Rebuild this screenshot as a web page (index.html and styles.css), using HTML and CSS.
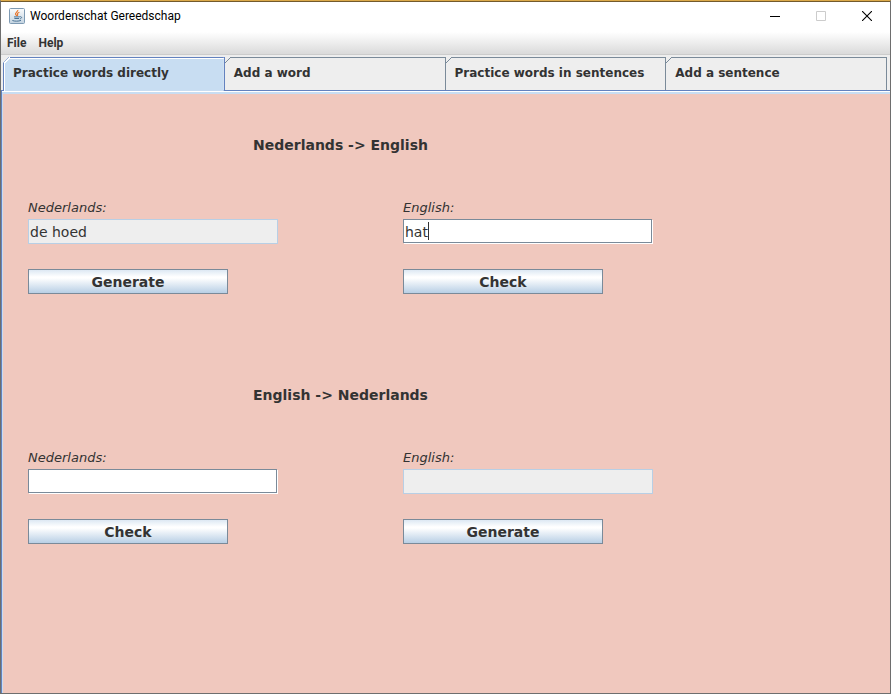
FILE: index.html
```html
<!DOCTYPE html>
<html lang="nl">
<head>
    <meta charset="UTF-8">
    <meta name="viewport" content="width=device-width, initial-scale=1.0">
    <title>Woordenschat Gereedschap</title>
    <link rel="stylesheet" href="styles.css">
</head>
<body>

    <header class="titlebar">
        <svg class="app-icon" width="16" height="16" viewBox="0 0 16 16">
            <defs>
                <linearGradient id="iconBg" x1="0" y1="0" x2="0" y2="1">
                    <stop offset="0" stop-color="#fbfcfd"/>
                    <stop offset="1" stop-color="#c3d3e0"/>
                </linearGradient>
            </defs>
            <rect x="0.5" y="0.5" width="15" height="15" rx="1" fill="url(#iconBg)" stroke="#7e9ab3"/>
            <path d="M8.8 2C9.2 3.6 5.6 4.8 6.6 6.4L7.8 8M10.4 4.2C8.2 5 8 5.9 8.7 6.8L8.2 8" fill="none" stroke="#e8762c" stroke-width="1.2"/>
            <path d="M5 8.9H10.6M5.4 10.5H10M3.4 12.5C5.5 13.4 9.6 13.4 12 12.4M10.6 8.7C13.4 8.3 13 10.5 10.8 10.9" fill="none" stroke="#4a7396"/>
        </svg>
        <h1>Woordenschat Gereedschap</h1>
        <div class="window-buttons">
            <button type="button" aria-label="Minimize">
                <svg width="10" height="10" viewBox="0 0 10 10"><path d="M0 5.5H10" stroke="#000"/></svg>
            </button>
            <button type="button" aria-label="Maximize" disabled>
                <svg width="10" height="10" viewBox="0 0 10 10"><path d="M0.5 0.5H9.5V9.5H0.5Z" fill="none" stroke="#ccc"/></svg>
            </button>
            <button type="button" aria-label="Close">
                <svg width="10" height="10" viewBox="0 0 10 10"><path d="M0 0L10 10M10 0L0 10" stroke="#000" stroke-width="1.1"/></svg>
            </button>
        </div>
    </header>

    <nav class="menubar">
        <a href="#file">File</a>
        <a href="#help">Help</a>
    </nav>

    <div class="tabs" role="tablist">
        <button type="button" class="tab active" role="tab" aria-selected="true">Practice words directly</button>
        <button type="button" class="tab" role="tab">Add a word</button>
        <button type="button" class="tab" role="tab">Practice words in sentences</button>
        <button type="button" class="tab" role="tab">Add a sentence</button>
    </div>

    <main>
        <form class="practice">
            <h2>Nederlands -&gt; English</h2>
            <div class="column">
                <label for="nlWord">Nederlands:</label>
                <input type="text" id="nlWord" value="de hoed" readonly>
                <button type="button">Generate</button>
            </div>
            <div class="column">
                <label for="enAnswer">English:</label>
                <div class="field">
                    <input type="text" id="enAnswer" value="hat">
                    <span class="caret"></span>
                </div>
                <button type="button">Check</button>
            </div>
        </form>

        <form class="practice">
            <h2>English -&gt; Nederlands</h2>
            <div class="column">
                <label for="nlAnswer">Nederlands:</label>
                <input type="text" id="nlAnswer">
                <button type="button">Check</button>
            </div>
            <div class="column">
                <label for="enWord">English:</label>
                <input type="text" id="enWord" readonly>
                <button type="button">Generate</button>
            </div>
        </form>
    </main>

</body>
</html>
```
FILE: styles.css
```css
* {
    margin: 0;
    padding: 0;
    box-sizing: border-box;
}

body {
    font-family: Verdana, 'DejaVu Sans', sans-serif;
    color: #333;
    background-color: #eee;
    display: flex;
    flex-direction: column;
    min-height: 100vh;
    border: 1px solid #6e6e6e;
    border-top-color: #dcaa4a;
}

button {
    font-family: inherit;
    color: inherit;
}

.titlebar {
    display: flex;
    align-items: center;
    height: 31px;
    padding: 0 0 2px 8px;
    background-color: #fff;
    border-top: 1px solid #735a2c;
}

.titlebar h1 {
    flex: 1;
    margin-left: 5px;
    font: 12px 'Segoe UI', Roboto, sans-serif;
    color: #000;
}

.window-buttons {
    display: flex;
}

.window-buttons button {
    display: flex;
    align-items: center;
    justify-content: center;
    width: 46px;
    height: 28px;
    border: none;
    background: none;
}

.menubar {
    display: flex;
    gap: 12px;
    height: 23px;
    padding-left: 6px;
    line-height: 22px;
    background: linear-gradient(#fff, #dadada);
    border-bottom: 1px solid #ccc;
}

.menubar a {
    font-family: Tahoma, Roboto, sans-serif;
    font-size: 12px;
    font-weight: bold;
    color: #333;
    text-decoration: none;
}

.tabs {
    display: flex;
    padding: 2px 3px 0 2px;
    border-bottom: 1px solid #6382bf;
}

/* the corner line and the top edge are background layers */
.tab {
    flex: 1;
    height: 33px;
    padding: 0 0 1px 9px;
    text-align: left;
    font-size: 12px;
    font-weight: bold;
    border: none;
    border-left: 1px solid #7a8a99;
    background:
        linear-gradient(135deg, transparent 42%, #7a8a99 42%, #7a8a99 56%, transparent 56%) 0 0 / 6px 6px no-repeat,
        linear-gradient(#7a8a99, #7a8a99) 5px 0 / 100% 1px no-repeat,
        #eee;
}

.tab:last-child {
    border-right: 1px solid #7a8a99;
}

.tab.active {
    margin-bottom: -1px;
    height: 34px;
    padding-bottom: 2px;
    border-color: #6382bf;
    background:
        linear-gradient(135deg, #6382bf 50%, #fff 50%, #fff 65%, transparent 65%) 0 0 / 6px 6px no-repeat,
        linear-gradient(#6382bf 1px, #fff 1px) 5px 0 / 100% 2px no-repeat,
        linear-gradient(#fff, #fff) 0 0 / 1px 100% no-repeat,
        #c8ddf2;
    clip-path: polygon(0 6px, 6px 0, 100% 0, 100% 100%, 0 100%);
}

.tab.active + .tab {
    border-left-color: #6382bf;
}

main {
    flex: 1;
    padding: 42px 26px 0;
    background-color: #f0c8be;
    border-left: 1px solid #6382bf;
    box-shadow: inset 0 1px #fff, inset 1px 3px #c8ddf2;
}

.practice {
    display: grid;
    grid-template-columns: 250px 250px;
    column-gap: 125px;
    row-gap: 41px;
    margin-bottom: 89px;
}

.practice h2 {
    grid-column: 1 / 3;
    text-align: center;
    font-size: 14px;
    line-height: 24px;
}

.column {
    display: flex;
    flex-direction: column;
    align-items: flex-start;
}

.column label {
    margin-bottom: 1px;
    font-size: 13px;
    font-style: italic;
    line-height: 20px;
}

.field {
    position: relative;
    width: 100%;
}

/* 1px highlight right and below the box, like the Metal look */
.column input {
    display: block;
    width: 249px;
    height: 24px;
    margin: 0 1px 1px 0;
    padding: 1px 1px 0;
    font: 14px Verdana, 'DejaVu Sans', sans-serif;
    color: #333;
    background-color: #fff;
    border: 1px solid #7a8a99;
    box-shadow: 1px 1px #fff;
    outline: none;
}

.column input[readonly] {
    width: 250px;
    height: 25px;
    margin: 0;
    padding: 0 1px;
    background-color: #eee;
    border-color: #b8cfe5;
    box-shadow: none;
}

.caret {
    position: absolute;
    left: 25px;
    top: 3px;
    width: 1px;
    height: 18px;
    background-color: #333;
}

.column button {
    width: 200px;
    height: 25px;
    margin-top: 25px;
    font-size: 14px;
    font-weight: bold;
    border: 1px solid #7a8a99;
    background: linear-gradient(#dde8f3, #fff 30%, #fff 35%, #b8cfe5);
}
```
